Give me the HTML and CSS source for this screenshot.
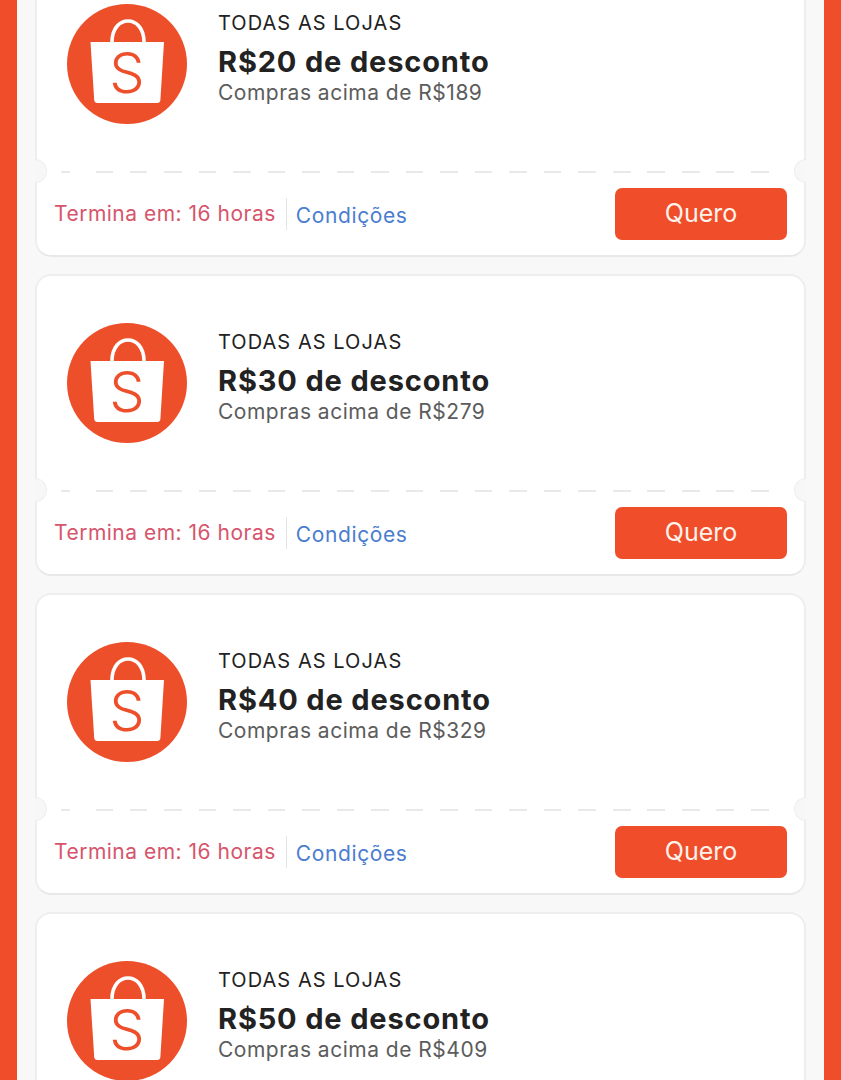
FILE: index.html
```html
<!DOCTYPE html>
<html lang="pt-BR">
<head>
    <meta charset="UTF-8">
    <title>Cupons</title>
    <link rel="stylesheet" href="styles.css">
</head>
<body>
    <svg class="defs" width="0" height="0">
        <symbol id="bag-logo" viewBox="0 0 120 120">
            <circle cx="60" cy="60" r="60" fill="#ee4f2b"/>
            <path d="M45 38 C45 10 77 10 77 38" fill="none" stroke="#fff" stroke-width="3.6"/>
            <path d="M23.5 38 H97 L93.4 96 Q93.2 99 90 99 H30.5 Q27.5 99 27.2 96 Z" fill="#fff"/>
            <text x="60" y="89" text-anchor="middle" class="logo-s">S</text>
        </symbol>
    </svg>

    <div class="frame">
        <div class="card">
            <div class="card-top">
                <svg class="logo"><use href="#bag-logo"/></svg>
                <div class="info">
                    <div class="scope">TODAS AS LOJAS</div>
                    <div class="amount">R$20 de desconto</div>
                    <div class="min">Compras acima de R$189</div>
                </div>
            </div>
            <div class="dash"></div>
            <div class="card-bottom">
                <span class="ends">Termina em: 16 horas</span>
                <a class="terms">Condições</a>
                <button class="want">Quero</button>
            </div>
        </div>

        <div class="card">
            <div class="card-top">
                <svg class="logo"><use href="#bag-logo"/></svg>
                <div class="info">
                    <div class="scope">TODAS AS LOJAS</div>
                    <div class="amount">R$30 de desconto</div>
                    <div class="min">Compras acima de R$279</div>
                </div>
            </div>
            <div class="dash"></div>
            <div class="card-bottom">
                <span class="ends">Termina em: 16 horas</span>
                <a class="terms">Condições</a>
                <button class="want">Quero</button>
            </div>
        </div>

        <div class="card">
            <div class="card-top">
                <svg class="logo"><use href="#bag-logo"/></svg>
                <div class="info">
                    <div class="scope">TODAS AS LOJAS</div>
                    <div class="amount">R$40 de desconto</div>
                    <div class="min">Compras acima de R$329</div>
                </div>
            </div>
            <div class="dash"></div>
            <div class="card-bottom">
                <span class="ends">Termina em: 16 horas</span>
                <a class="terms">Condições</a>
                <button class="want">Quero</button>
            </div>
        </div>

        <div class="card">
            <div class="card-top">
                <svg class="logo"><use href="#bag-logo"/></svg>
                <div class="info">
                    <div class="scope">TODAS AS LOJAS</div>
                    <div class="amount">R$50 de desconto</div>
                    <div class="min">Compras acima de R$409</div>
                </div>
            </div>
        </div>
    </div>
</body>
</html>
```

FILE: styles.css
```css
html, body { margin: 0; height: 1080px; overflow: hidden; }
body { font-family: Inter, "Noto Sans", sans-serif; background-color: #f8f8f8; }
.defs { display: block; height: 0; }
.frame { display: flex; flex-direction: column; gap: 17px; margin-top: -45px; padding: 0 18px; border-left: 17px solid #f04e2b; border-right: 17px solid #f04e2b; min-height: 1200px; }

.card { position: relative; box-sizing: border-box; height: 302px; flex: none; background: white; border: 2px solid #eeeeee; border-bottom-color: #e8e8e8; border-radius: 16px; }
.card::before, .card::after { content: ""; position: absolute; top: 202px; width: 12px; height: 24px; background: #f7f7f7; border: 1px solid #eeeeee; box-sizing: border-box; }
.card::before { left: -2px; border-left: none; border-radius: 0 12px 12px 0; }
.card::after { right: -2px; border-right: none; border-radius: 12px 0 0 12px; }

.card-top { display: flex; gap: 31px; height: 214px; box-sizing: border-box; padding: 47px 0 0 30px; }
.logo { width: 120px; height: 120px; flex: none; }
.logo-s { font-family: Inter, sans-serif; font-weight: 300; font-size: 56px; fill: #ee4f2b; }
.info { padding-top: 5px; }
.scope { font-size: 20px; letter-spacing: 1.05px; line-height: 28px; margin-bottom: 7px; color: #222; }
.amount { font-size: 29px; letter-spacing: 0.85px; font-weight: 700; line-height: 36px; color: #222; }
.min { font-size: 21px; letter-spacing: 0.5px; line-height: 26px; color: #5c5c5c; }

.dash { height: 2px; margin: 0 33px 0 24px; background: linear-gradient(white, white) 9px 0 / 26px 100% no-repeat, repeating-linear-gradient(to right, #e9e9e9 0 17.5px, transparent 17.5px 34.5px); }

.card-bottom { display: flex; align-items: center; box-sizing: border-box; height: 80px; padding: 1px 17px 0; }
.ends { font-size: 21px; letter-spacing: 0.5px; color: #d6556c; padding-right: 10px; line-height: 32px; border-right: 1px solid #e4e4e4; }
.terms { font-size: 21px; letter-spacing: 0.6px; color: #4a7dcf; margin-left: 9px; padding-top: 4px; }
.want { margin-left: auto; width: 172px; height: 52px; padding-bottom: 2px; font-family: inherit; font-size: 25px; color: #fff3ec; background-color: #f04e2b; border: none; border-radius: 7px; cursor: pointer; }
```
